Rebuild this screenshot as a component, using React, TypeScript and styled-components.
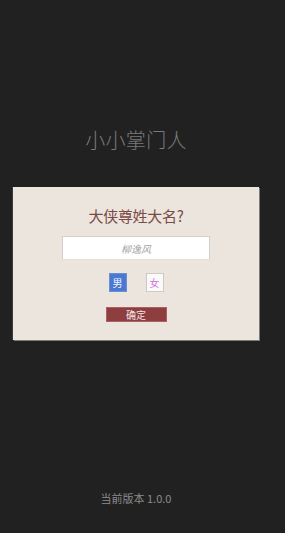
import React from "react";
import styled, { createGlobalStyle } from "styled-components";

const Global = createGlobalStyle`
  html, body { margin: 0; padding: 0; background: #212121; }
  * { box-sizing: border-box; }
  body { font-family: "Noto Sans CJK SC", "Noto Sans", sans-serif; }
`;

const Page = styled.div`
  width: 272px;
  height: 533px;
  display: flex;
  flex-direction: column;
  background: #212121;
`;

const AppTitle = styled.h1`
  margin: 128px 0 0;
  font-size: 20px;
  line-height: 24px;
  font-weight: 300;
  color: #7a7a7a;
  text-align: center;
  letter-spacing: 0.3px;
`;

const Card = styled.div`
  margin: 35px auto 0;
  width: 246px;
  height: 153px;
  background: #ebe5de;
  box-shadow: 1px 1px 0 #7d7a78, -1px 0 0 #3a3a3a;
  display: flex;
  flex-direction: column;
  align-items: center;
  padding-top: 19px;
`;

const Question = styled.div`
  font-size: 15px;
  line-height: 20px;
  font-weight: 400;
  color: #7b4b46;
  letter-spacing: -0.3px;
`;

const NameInput = styled.input`
  margin-top: 10px;
  width: 148px;
  height: 24px;
  border: 1px solid #d4cfca;
  border-bottom-color: #e4e0dc;
  background: #fff;
  text-align: center;
  font-family: "Noto Sans CJK SC", sans-serif;
  font-size: 10px;
  font-style: italic;
  outline: none;
  &::placeholder { color: #a6a6a6; }
`;

const GenderRow = styled.div`
  margin-top: 13px;
  display: flex;
  gap: 19px;
`;

const GenderBtn = styled.button<{ $active?: boolean }>`
  width: 18px;
  height: 19px;
  padding: 0;
  border: 1px solid ${(p) => (p.$active ? "#6b8fcf" : "#cfcac6")};
  background: ${(p) => (p.$active ? "#4a78d2" : "#fbfafa")};
  color: ${(p) => (p.$active ? "#f4f6fb" : "#d46ee0")};
  font-family: "Noto Sans CJK SC", sans-serif;
  font-size: 10px;
  line-height: 17px;
  display: flex;
  align-items: center;
  justify-content: center;
`;

const Confirm = styled.button`
  margin-top: 15px;
  width: 61px;
  height: 15px;
  padding: 0;
  border: 1px solid #a86060;
  background: #8e3e3f;
  color: #f1e6e4;
  font-family: "Noto Sans CJK SC", sans-serif;
  font-size: 10px;
  line-height: 13px;
  display: flex;
  align-items: center;
  justify-content: center;
`;

const Version = styled.div`
  margin-top: auto;
  margin-bottom: 28px;
  text-align: center;
  font-size: 11px;
  line-height: 14px;
  color: #8c8c8c;
`;

export default function App() {
  return (
    <Page>
      <Global />
      <AppTitle>小小掌门人</AppTitle>
      <Card>
        <Question>大侠尊姓大名?</Question>
        <NameInput placeholder="柳逸风" />
        <GenderRow>
          <GenderBtn $active>男</GenderBtn>
          <GenderBtn>女</GenderBtn>
        </GenderRow>
        <Confirm>确定</Confirm>
      </Card>
      <Version>当前版本 1.0.0</Version>
    </Page>
  );
}
